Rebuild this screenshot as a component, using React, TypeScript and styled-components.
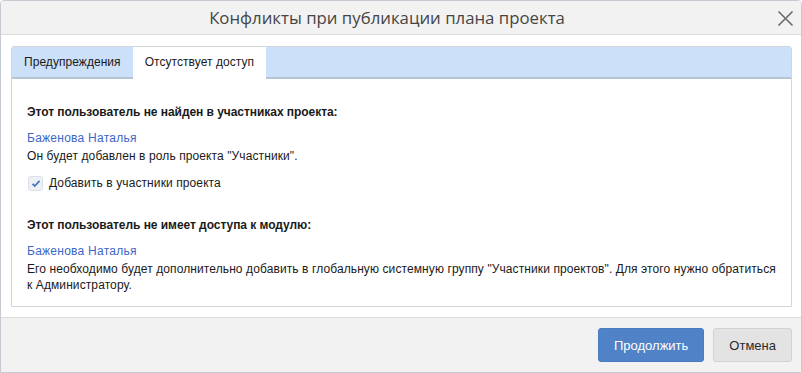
import React, { useState } from "react";
import styled, { createGlobalStyle } from "styled-components";

const GlobalStyle = createGlobalStyle`
  html, body {
    margin: 0;
    padding: 0;
    background: #ffffff;
  }
  * {
    box-sizing: border-box;
  }
`;

const Dialog = styled.div`
  width: 802px;
  height: 373px;
  display: flex;
  flex-direction: column;
  border: 1px solid #c6cad1;
  border-radius: 4px 4px 0 0;
  background: #ffffff;
  font-family: "Liberation Sans", Arial, sans-serif;
  font-size: 12px;
  letter-spacing: 0.1px;
  color: #1a1a1a;
  overflow: hidden;
`;

const DialogHeader = styled.div`
  height: 34px;
  flex: none;
  display: flex;
  align-items: center;
  justify-content: center;
  position: relative;
  padding-right: 28px;
  background: #f2f2f2;
  border-bottom: 1px solid #dcdcdc;
`;

const DialogTitle = styled.h1`
  margin: 0;
  font-family: "Open Sans", "Noto Sans", sans-serif;
  font-size: 16.8px;
  font-weight: 400;
  color: #454545;
  letter-spacing: 0;
`;

const CloseButton = styled.button`
  position: absolute;
  right: 7px;
  top: 8px;
  width: 18px;
  height: 18px;
  padding: 0;
  border: none;
  background: transparent;
  cursor: pointer;
  display: flex;
  align-items: center;
  justify-content: center;
`;

const DialogBody = styled.div`
  flex: 1;
  padding: 11px 9px 10px 10px;
  display: flex;
  flex-direction: column;
`;

const TabPanel = styled.div`
  flex: 1;
  display: flex;
  flex-direction: column;
  border: 1px solid #d2d5db;
  border-radius: 3px 3px 0 0;
  overflow: hidden;
`;

const TabStrip = styled.div`
  height: 32px;
  flex: none;
  display: flex;
  background: #cce0f9;
  border-bottom: 2px solid #b7c4d3;
`;

const Tab = styled.button<{ $active?: boolean }>`
  height: 32px;
  margin-bottom: -2px;
  padding: 0 12px 2px;
  border: none;
  font-family: "Liberation Sans", Arial, sans-serif;
  font-size: 12px;
  letter-spacing: 0.05px;
  color: #1a1a1a;
  background: ${(p) => (p.$active ? "#ffffff" : "transparent")};
  cursor: pointer;
`;

const TabContent = styled.div`
  flex: 1;
  padding: 25px 15px 0;
  display: flex;
  flex-direction: column;
`;

const Section = styled.div`
  display: flex;
  flex-direction: column;
  & + & {
    margin-top: 26px;
  }
`;

const SectionTitle = styled.div`
  font-weight: 700;
  letter-spacing: -0.05px;
  line-height: 16px;
  color: #1a1a1a;
`;

const UserLink = styled.a`
  margin-top: 10px;
  line-height: 16px;
  letter-spacing: 0.25px;
  color: #3b67c9;
  text-decoration: none;
  cursor: pointer;
`;

const Note = styled.div`
  margin-top: 2px;
  line-height: 16px;
`;

const CheckRow = styled.label`
  margin-top: 11px;
  display: flex;
  align-items: center;
  gap: 6px;
  line-height: 16px;
  cursor: pointer;
`;

const CheckBox = styled.span<{ $checked: boolean }>`
  width: 15px;
  height: 15px;
  margin-left: 1px;
  border-radius: 3px;
  border: 1px solid #dde0e7;
  background: #edf0f5;
  display: flex;
  align-items: center;
  justify-content: center;
`;

const DialogFooter = styled.div`
  height: 55px;
  flex: none;
  display: flex;
  justify-content: flex-end;
  align-items: flex-start;
  gap: 9px;
  padding: 10px 9px 0 0;
  background: #f2f2f2;
  border-top: 1px solid #dcdcdc;
`;

const Button = styled.button<{ $primary?: boolean }>`
  height: 34px;
  padding: 0 15px;
  border-radius: 3px;
  font-family: "Liberation Sans", Arial, sans-serif;
  font-size: 13px;
  cursor: pointer;
  border: 1px solid ${(p) => (p.$primary ? "#4a7cc2" : "#d2d2d2")};
  background: ${(p) => (p.$primary ? "#4f82c7" : "#e3e3e3")};
  color: ${(p) => (p.$primary ? "#ffffff" : "#2a2a2a")};
`;

export default function App() {
  const [tab, setTab] = useState("access");
  const [addMember, setAddMember] = useState(true);

  return (
    <>
      <GlobalStyle />
      <Dialog>
        <DialogHeader>
          <DialogTitle>Конфликты при публикации плана проекта</DialogTitle>
          <CloseButton aria-label="Закрыть">
            <svg width="17" height="17" viewBox="0 0 17 17">
              <path
                d="M1.5 1.5 L15.5 15.5 M15.5 1.5 L1.5 15.5"
                stroke="#6b6b6b"
                strokeWidth="1.6"
                fill="none"
              />
            </svg>
          </CloseButton>
        </DialogHeader>
        <DialogBody>
          <TabPanel>
            <TabStrip>
              <Tab $active={tab === "warnings"} onClick={() => setTab("warnings")}>
                Предупреждения
              </Tab>
              <Tab $active={tab === "access"} onClick={() => setTab("access")}>
                Отсутствует доступ
              </Tab>
            </TabStrip>
            <TabContent>
              <Section>
                <SectionTitle>Этот пользователь не найден в участниках проекта:</SectionTitle>
                <UserLink>Баженова Наталья</UserLink>
                <Note>Он будет добавлен в роль проекта "Участники".</Note>
                <CheckRow onClick={() => setAddMember(!addMember)}>
                  <CheckBox $checked={addMember}>
                    {addMember && (
                      <svg width="10" height="9" viewBox="0 0 10 9">
                        <path
                          d="M1.5 4.8 L3.8 7 L8.5 1.8"
                          stroke="#4876c0"
                          strokeWidth="1.8"
                          fill="none"
                        />
                      </svg>
                    )}
                  </CheckBox>
                  Добавить в участники проекта
                </CheckRow>
              </Section>
              <Section>
                <SectionTitle>Этот пользователь не имеет доступа к модулю:</SectionTitle>
                <UserLink>Баженова Наталья</UserLink>
                <Note>
                  Его необходимо будет дополнительно добавить в глобальную системную группу "Участники
                  проектов". Для этого нужно обратиться к Администратору.
                </Note>
              </Section>
            </TabContent>
          </TabPanel>
        </DialogBody>
        <DialogFooter>
          <Button $primary>Продолжить</Button>
          <Button>Отмена</Button>
        </DialogFooter>
      </Dialog>
    </>
  );
}
